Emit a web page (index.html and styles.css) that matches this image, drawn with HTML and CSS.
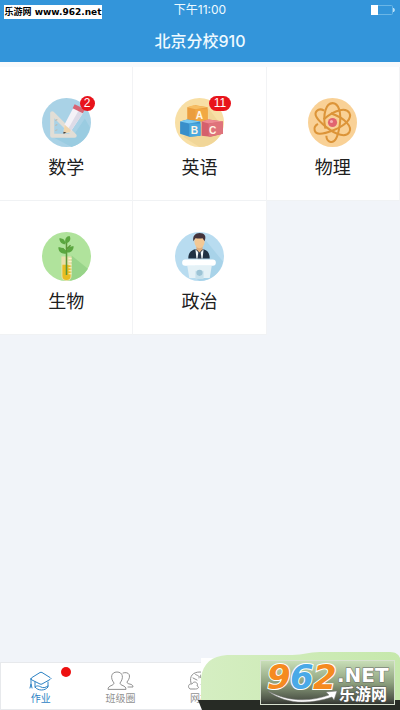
FILE: index.html
```html
<!DOCTYPE html>
<html lang="zh-CN">
<head>
<meta charset="utf-8">
<meta name="viewport" content="width=device-width, initial-scale=1">
<title>北京分校910</title>
<link rel="stylesheet" href="styles.css">
</head>
<body>
<div class="app">
  <header class="header">
    <div class="status">
      <time>下午11:00</time>
      <svg class="battery" width="24" height="10" viewBox="0 0 24 10" aria-hidden="true"><rect x=".5" y=".5" width="21" height="9" rx="1" fill="none" stroke="#6bb6e6"/><path d="M0 0h7v10H0z" fill="#fff"/><path d="M22 3h1l1 2-1 2h-1z" fill="#b9dff7"/></svg>
    </div>
    <h1 class="title">北京分校910</h1>
    <span class="site-tag">乐游网 www.962.net</span>
  </header>

  <main class="subjects">
    <a class="subject" href="#math">
      <span class="picture">
        <svg viewBox="0 0 48 48" aria-hidden="true"><circle cx="24" cy="24" r="24" fill="#a9d2e6"/><path d="M32 35 42 20l5 9c-2 9-9 17-18 19L10 38z" fill="#9acce1"/><path d="M10 15v22h22z" fill="none" stroke="#e2ded6" stroke-width="4" stroke-linejoin="round"/><path d="m13 22 2-1m-2 6 2-1m-2 6 2-1" stroke="#bcb9af"/><path d="m31 9 9 6-12 18-7 2 1-9z" fill="#f5f2f7"/><path d="m36 12 4 3-12 18-4 0z" fill="#dedbe7"/><path d="m22 26 6 5v2l-7 2z" fill="#efd5ad"/><path d="m21 33 3 1-3 1z" fill="#333"/><path d="m30 10 2-4 10 5-2 4z" fill="#d96472"/></svg>
        <span class="badge">2</span>
      </span>
      <span class="name">数学</span>
    </a>
    <a class="subject" href="#english">
      <span class="picture">
        <svg viewBox="0 0 48 48" aria-hidden="true"><circle cx="24" cy="24" r="24" fill="#f8dfa5"/><path d="m32 9 15 20c-2 11-12 19-23 19L8 38l25-14z" fill="#f1d698"/><path d="m12 9 8-2 12 2v14H12z" fill="#eb9d3d"/><path d="m12 9 6-2 14 2-12 2z" fill="#f7be63"/><path d="M20 11h12v12H20z" fill="#f2a943"/><path d="m5 23 7-2 13 2v14l-11 1-9-3z" fill="#398fca"/><path d="m5 23 7-2 13 2-11 2z" fill="#7acbf2"/><path d="M14 25h11v12l-11 1z" fill="#4aa9df"/><path d="m26 23 7-2 14 2v12l-12 3-9-1z" fill="#d5606c"/><path d="m26 23 7-2 14 2-14 2z" fill="#ed8b91"/><path d="m33 25 14-2v12l-14 3z" fill="#df737b"/><g class="blocks"><text x="24" y="21">A</text><text x="19" y="35">B</text><text x="37" y="35">C</text></g></svg>
        <span class="badge badge-wide">11</span>
      </span>
      <span class="name">英语</span>
    </a>
    <a class="subject" href="#physics">
      <span class="picture">
        <svg viewBox="0 0 48 48" aria-hidden="true"><circle cx="24" cy="24" r="24" fill="#f9d196"/><g fill="none" stroke="#dc9438" stroke-width="2"><path id="orbit" d="M17 30C14 15 18 5 24 5s9 9 7 22-5 17-9 16q-4-1-4-6"/><use href="#orbit" transform="rotate(60 24 24)"/><use href="#orbit" transform="rotate(120 24 24)"/></g><circle cx="24" cy="24" r="4.500" fill="#e16470"/><circle cx="23" cy="23" r="1.500" fill="#f6b2b4"/></svg>
      </span>
      <span class="name">物理</span>
    </a>
    <a class="subject" href="#biology">
      <span class="picture">
        <svg viewBox="0 0 48 48" aria-hidden="true"><circle cx="24" cy="24" r="24" fill="#b0e39c"/><path d="m29 23 16 13a24 24 0 0 1-17 11.500L24 45z" fill="#98d489"/><path d="M19 24h10v19a5 5 0 0 1-10 0z" fill="#eadfa9"/><path d="M20 32h8v11a4 4 0 0 1-8 0z" fill="#e8bd22"/><path d="M26 26h3m-3 3h3m-3 3h3m-3 3h3m-3 3h3m-3 3h3" stroke="#f7f6cb"/><path d="M24 42V10m0 10-4-4m4 1 4-4" fill="none" stroke="#5c9738" stroke-width="1.500"/><path d="M24 21c-4 1-8-1-8-6 4 0 8 2 8 6zm0-1c0-4 3-6 7-6 0 4-3 7-7 6zm-1-8c-4 0-6-3-6-6 4 0 6 2 6 6zm0-1c-1-4 1-7 4-7 2 3 0 7-4 7z" fill="#5aa63f"/></svg>
      </span>
      <span class="name">生物</span>
    </a>
    <a class="subject" href="#politics">
      <span class="picture">
        <svg viewBox="0 0 48 48" aria-hidden="true"><circle cx="24" cy="24" r="24" fill="#b8dcf0"/><path d="m30 8 17 21c-2 11-12 19-23 19l-8-6z" fill="#a8d3e9"/><path d="M13 26c0-6 3-8 7-9h8c4 1 6 4 6 9z" fill="#203143"/><path d="m20 17 4 4 4-4-1 9h-6z" fill="#f5fbfc"/><path d="m23 19h2l1 7h-4z" fill="#29384c"/><path d="M21 13h6v4l-3 3-3-3z" fill="#dfac7b"/><ellipse cx="24" cy="9" rx="5" ry="7" fill="#f3c894"/><path d="M18 9c-1-5 2-8 6-8 5 0 7 3 5 8l-2-3c-3 1-6 0-7 0z" fill="#43333b"/><rect x="7" y="27" width="33" height="6" rx="3" fill="#fff"/><path d="M12 33h24l-2 12H14z" fill="#e4f1f6"/><path d="M20 38h8v8h-8z" fill="#c7e1ec"/><circle cx="24" cy="40" r="3" fill="#9cc3d5"/></svg>
      </span>
      <span class="name">政治</span>
    </a>
  </main>

  <nav class="tabs">
    <a class="tab tab-active" href="#homework">
      <svg width="24" height="20" viewBox="0 0 24 20" aria-hidden="true"><path d="M2 8Q2 7 3 6.500L11 1.500q1-.5 2 0l8 5q2 1 0 2L13 13q-1 .5-2 0L3 9Q2 8.500 2 8zv5M1 17l1-4 1 4M6 11v5c3 4 10 4 13 0v-5M6 16c2-2 4-1 6 0s4 1 7-1"/></svg>
      <span>作业</span><i class="dot"></i>
    </a>
    <a class="tab" href="#class">
      <svg width="28" height="20" viewBox="0 0 28 20" aria-hidden="true"><path d="M2 18c0-4 6-3 6-6-4-5-3-11 3-11s7 6 3 11c0 3 6 2 6 6zM17 2c6-2 9 3 4 9 0 3 6 1 6 5h-5"/></svg>
      <span>班级圈</span>
    </a>
    <a class="tab" href="#web">
      <svg width="26" height="20" viewBox="0 0 26 20" aria-hidden="true"><path d="M4 12C2 5 6 1 13 1s12 6 9 13M8 18H3c-3-2-1-6 2-5 2-4 7-1 5 2 3 1 1 3-1 3zM8 3c2 2 5 1 4 4m-6 0 4 2m5-7-2 4 5 3-4 4"/></svg>
      <span>网校</span>
    </a>
  </nav>

  <aside class="watermark">
    <svg viewBox="0 0 204 60" role="img" aria-label="962.NET 乐游网">
      <defs>
        <linearGradient id="panel" x2="0" y2="1"><stop stop-color="#c9dfb8"/><stop offset=".5" stop-color="#8fa27f"/><stop offset=".88" stop-color="#50574a"/><stop offset="1" stop-color="#30332e"/></linearGradient>
        <linearGradient id="leaf"><stop stop-color="#d5eec2"/><stop offset="1" stop-color="#c6e8ac"/></linearGradient>
      </defs>
      <path d="M5 8h20L5 30z" fill="#fff"/>
      <path d="M5 50V28C7 13 16 6 31 5h65c12 0 16-3 28-3h70c6 0 9 3 10 6v42z" fill="url(#leaf)"/>
      <path d="M2 50h202v10H6z" fill="#272b25"/>
      <rect x="64.500" y="10.500" width="134" height="44" fill="url(#panel)" stroke="#d8e2d0"/>
      <g class="digits"><text x="71" y="39" fill="#f58a20">9</text><text x="94" y="39" fill="#4aa9e7">6</text><text x="117" y="39" fill="#f58a20">2</text></g>
      <text class="domain" x="141" y="32">.NET</text>
      <text class="brand" x="143" y="50">乐游网</text>
      <path d="M72 41c20 11 42 11 61 4l-3-3 11-1-3 9-2-3c-24 8-47 7-64-6z" fill="#fff" stroke="#777" stroke-width=".5"/>
    </svg>
  </aside>
</div>
</body>
</html>
```
FILE: styles.css
```css
* { box-sizing: border-box; }
body {
  margin: 0;
  background: #f1f4f9;
  color: #202020;
  font-family: "Liberation Sans", "Noto Sans CJK SC", sans-serif;
}
a { color: inherit; text-decoration: none; }
.app {
  position: relative;
  display: flex;
  flex-direction: column;
  min-height: 100vh;
}
.header {
  position: relative;
  height: 62px;
  background: #3395da;
  color: #effaff;
  font-family: Inter, "Noto Sans CJK SC", sans-serif;
  text-align: center;
}
.status {
  display: flex;
  align-items: center;
  justify-content: center;
  height: 20px;
  font-size: 12px;
  line-height: 20px;
}
.battery { position: absolute; top: 5px; right: 5px; }
.title {
  margin: 0;
  font-size: 16px;
  font-weight: 500;
  line-height: 42px;
}
.site-tag {
  position: absolute;
  top: 5px;
  left: 4px;
  width: 98px;
  background: #fff;
  color: #000;
  font: bold 9px/14px "DejaVu Sans", "Noto Sans CJK SC", sans-serif;
  white-space: nowrap;
}
.subjects {
  display: grid;
  grid-template-columns: repeat(3, 1fr);
  padding-top: 5px;
  background: linear-gradient(#f8fafc 5px, transparent 5px);
}
.subject {
  display: flex;
  flex-direction: column;
  align-items: center;
  height: 134px;
  padding-top: 31px;
  border-right: 1px solid #f2f3f5;
  border-bottom: 1px solid #f0f2f4;
  background: #fff;
}
.picture { position: relative; width: 49px; height: 49px; }
.picture svg { display: block; width: 100%; }
.blocks {
  fill: #fff5e5;
  font-size: 10px;
  font-weight: 700;
  text-anchor: middle;
}
.name { margin-top: 7px; font-size: 18px; line-height: 28px; }
.badge {
  position: absolute;
  top: -2px;
  left: 38px;
  min-width: 15px;
  height: 15px;
  border-radius: 8px;
  background: #e8131b;
  color: #fff;
  font-size: 12px;
  line-height: 15px;
  text-align: center;
}
.badge-wide { left: 34px; min-width: 22px; }
.tabs {
  display: grid;
  grid-template-columns: repeat(5, 1fr);
  height: 48px;
  margin-top: auto;
  border: 1px solid #e7e9ec;
  background: #fff;
  color: #929292;
}
.tab {
  position: relative;
  display: flex;
  flex-direction: column;
  align-items: center;
  gap: 1px;
  padding-top: 8px;
  font-size: 10px;
  line-height: 14px;
}
.tab svg {
  fill: none;
  stroke: currentColor;
  stroke-linecap: round;
  stroke-linejoin: round;
}
.tab-active { color: #2c82c4; }
.dot {
  position: absolute;
  top: 4px;
  left: 60px;
  width: 10px;
  height: 10px;
  border-radius: 50%;
  background: #ed1010;
}
.watermark {
  position: absolute;
  right: 0;
  bottom: 0;
  width: 204px;
  height: 60px;
}
.watermark svg { display: block; }
.digits {
  font: italic 700 34px "DejaVu Sans", sans-serif;
  stroke: #fff;
  stroke-width: 2px;
  paint-order: stroke;
}
.domain {
  fill: #fff;
  font: 700 20px "DejaVu Sans", sans-serif;
  stroke: #666;
  stroke-width: 1px;
  paint-order: stroke;
}
.brand {
  fill: #fff;
  font: 700 16px "Noto Sans CJK SC", sans-serif;
  stroke: #555;
  stroke-width: 1px;
  paint-order: stroke;
}
```
